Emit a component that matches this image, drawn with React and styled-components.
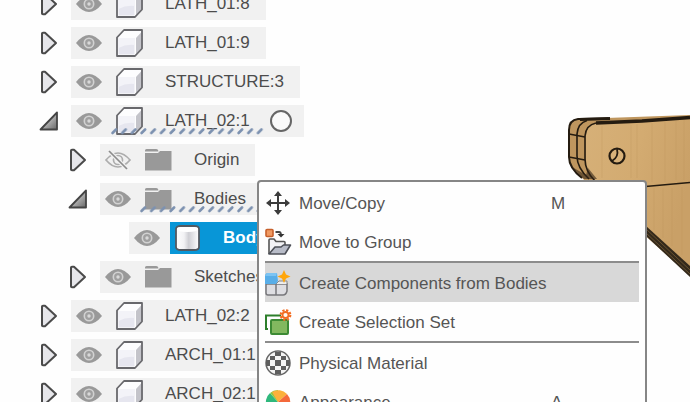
import React, { useState } from 'react';
import styled, { createGlobalStyle, css } from 'styled-components';

const GlobalStyle = createGlobalStyle`
  body {
    margin: 0;
    background: #fefefe;
    font-family: 'Liberation Sans', Arial, sans-serif;
  }
`;

const Workspace = styled.main`
  position: relative;
  display: flex;
  height: 100vh;
  overflow: hidden;
`;

const Tree = styled.ul`
  flex: none;
  margin: -12px 0 0;
  padding: 0;
  list-style: none;
  color: #4c4c4c;
  font-size: 17px;
`;

const Row = styled.li`
  display: flex;
  align-items: center;
  height: 32px;
  margin-bottom: 7px;
  padding-left: ${prop => 39 + prop.depth * 29}px;
`;

const iconButton = css`
  display: flex;
  flex: none;
  align-items: center;
  justify-content: center;
  padding: 0;
  border: 0;
  background: none;
`;

const Toggle = styled.button`
  ${iconButton}
  width: 20px;
  height: 24px;
  margin-right: 12px;
`;

const ToggleSpace = styled.span`
  width: 32px;
`;

const Strip = styled.div`
  position: relative;
  display: flex;
  align-items: center;
  height: 32px;
  padding-left: 5px;
  background: #f1f1f1;
`;

const EyeButton = styled.button`
  ${iconButton}
  width: 26px;
  height: 20px;
  margin-right: 10px;
`;

const Item = styled.div`
  display: flex;
  align-items: center;
  gap: 22px;
  height: 32px;
  padding: 0 16px 0 4px;
  ${prop =>
    prop.selected &&
    css`
      background: #0896d7;
      color: white;
      font-weight: bold;
    `}
`;

const Activate = styled.input`
  appearance: none;
  width: 22px;
  height: 22px;
  margin: 0 12px 0 4px;
  border: 2px solid #666;
  border-radius: 50%;
  background: #fafafa;
`;

const Hatch = styled.svg`
  position: absolute;
  left: 39px;
  bottom: 2px;
  width: 154px;
  height: 8px;
`;

const Viewport = styled.div`
  display: flex;
  flex: 1;
  justify-content: flex-end;
  min-width: 0;
  padding-top: 100px;
`;

const PartDrawing = styled.svg`
  flex: none;
  width: 130px;
  height: 200px;
`;

const Menu = styled.div`
  position: absolute;
  top: 180px;
  left: 257px;
  box-sizing: border-box;
  width: 390px;
  padding: 1px 6px;
  border: 2px solid #868686;
  border-radius: 4px;
  background: #fefefe;
`;

const MenuItem = styled.button`
  display: grid;
  grid-template-columns: 26px 1fr 80px;
  align-items: center;
  column-gap: 8px;
  width: 100%;
  height: 39px;
  padding: 0;
  border: 0;
  background: ${prop => (prop.active ? '#d8d8d8' : 'none')};
  color: #555;
  font-family: inherit;
  font-size: 17px;
  text-align: left;
  white-space: nowrap;
`;

const MenuText = styled.span`
  padding-top: 2px;
`;

const Shortcut = styled(MenuText)`
  padding-right: 8px;
  margin-left: -8px;
`;

const Separator = styled.hr`
  height: 2px;
  margin: 0;
  border: 0;
  background: #8c8c8c;
`;

const ArrowIcon = ({ open }) => (
  <svg width="20" height="24" viewBox="0 0 20 24" strokeLinejoin="round">
    <defs>
      <linearGradient id="arrowOpen" x1="0" y1="0" x2="1" y2="1">
        <stop offset="0.3" stopColor="#d0d0d0" />
        <stop offset="1" stopColor="#666" />
      </linearGradient>
    </defs>
    {open ? (
      <path d="M18 3.5V20.5H1.5z" fill="url(#arrowOpen)" stroke="#444" strokeWidth="1.8" />
    ) : (
      <path d="M3 2.5Q3 1.8 4 1.8H6L17 12L6 22.2H4Q3 22.2 3 21.5z" fill="#e6e6ea" stroke="#4a4a4a" strokeWidth="2" />
    )}
  </svg>
);

const EyeIcon = ({ hidden }) => (
  <svg width="26" height="20" viewBox="0 0 26 20" fill="none">
    {hidden ? (
      <g stroke="#adadad" strokeWidth="1.7">
        <path d="M1 10Q13-4 25 10Q13 24 1 10z" />
        <circle cx="13" cy="10" r="4.5" />
        <path d="M4 1L22 19" stroke="#f1f1f1" strokeWidth="4" />
        <path d="M4 1L22 19" stroke="#8c8c8c" />
      </g>
    ) : (
      <g>
        <path d="M0 10Q13-6 26 10Q13 26 0 10z" fill="#999" />
        <circle cx="13" cy="10" r="4.7" stroke="#d2d2d2" strokeWidth="1.6" fill="#a0a0a0" />
        <circle cx="13" cy="10" r="1.7" fill="#d8d8d8" />
      </g>
    )}
  </svg>
);

const ComponentIcon = () => (
  <svg width="27" height="28" viewBox="0 0 27 28" strokeLinejoin="round">
    <path d="M1 8.500L8 1H26V19.500L19 27H1z" fill="#fdfdfe" />
    <path d="M2.500 9H18.500V25.500H2.500z" fill="#e6e6ef" />
    <path d="M2.500 9H18.500V16Q10 15 2.500 19z" fill="#f3f3f8" />
    <path d="M20 9L25.500 3V19L20 25z" fill="#c4c4ca" />
    <path d="M1 8.500L8 1H26V19.500L19 27H1z" fill="none" stroke="#68686c" strokeWidth="1.8" />
  </svg>
);

const FolderIcon = () => (
  <svg width="27" height="24" viewBox="0 0 27 24" fill="#999">
    <path d="M0 2.5Q0 1 1.5 1H11Q12.5 1 13 2L13.5 3.5H0z" />
    <path d="M0 5H13L15 3H26.5V22.5H0z" />
  </svg>
);

const BodyIcon = () => (
  <svg width="27" height="28" viewBox="0 0 27 28">
    <defs>
      <linearGradient id="bodySide">
        <stop offset="0" stopColor="#fff" />
        <stop offset="0.35" stopColor="#f2f2f4" />
        <stop offset="0.55" stopColor="#cfcfd4" />
        <stop offset="1" stopColor="#fff" />
      </linearGradient>
    </defs>
    <path d="M2 5Q2 2 7 2H20Q25 2 25 5V23Q25 26 20 26H7Q2 26 2 23z" fill="url(#bodySide)" stroke="#545960" strokeWidth="1.8" />
    <path d="M3 5Q3 3 7 3H20Q24 3 24 5Q24 8 13.5 8Q3 8 3 5z" fill="#fff" />
  </svg>
);

const HatchMarks = () => (
  <Hatch aria-hidden="true">
    <defs>
      <pattern id="hatch" width="9.7" height="8" patternUnits="userSpaceOnUse">
        <path d="M2.5 6L6 2.5" stroke="#7c91b0" strokeWidth="2.6" strokeLinecap="round" />
      </pattern>
    </defs>
    <rect width="100%" height="8" fill="url(#hatch)" />
  </Hatch>
);

const MoveIcon = () => (
  <svg width="26" height="26" viewBox="0 0 26 26" fill="#3b3b3b">
    <path d="M12 5h2v16h-2zM5 12h16v2H5z" />
    <path d="M13 1l4 5H9zM13 25l4-5H9zM1 13l5-4v8zM25 13l-5-4v8z" />
  </svg>
);

const MoveToGroupIcon = () => (
  <svg width="27" height="28" viewBox="0 0 27 28" strokeLinejoin="round">
    <rect x="1" y="1.5" width="7" height="7" rx="1" fill="#f09a62" stroke="#c7602b" strokeWidth="1.6" />
    <path d="M10.500 4H14Q16 4 16 7" fill="none" stroke="#444" strokeWidth="1.8" />
    <path d="M12.500 6H19.500L16 9.500z" fill="#333" />
    <path d="M4 26V12Q4 11 5 11H9L11 13.500H19Q20 13.500 20 14.500V18" fill="#f2f2f5" stroke="#555" strokeWidth="1.6" />
    <path d="M4 26L10 19H16L18.500 17H25.500L20 26z" fill="#b8bcc8" stroke="#4d5058" strokeWidth="1.6" />
  </svg>
);

const CreateComponentIcon = () => (
  <svg width="26" height="28" viewBox="0 0 26 28">
    <path d="M1 15H11V26H3Q1 26 1 24zM11 15H22V22Q21 26 18 26H11z" fill="#dedee2" stroke="#77777b" strokeWidth="1.5" />
    <path d="M11 15L14 12H22V15" fill="#eee" stroke="#888" />
    <path d="M0 7Q0 5 2 4H12L13 12L11 15H0z" fill="#59aee8" />
    <path d="M0 7L2 4H12L11 7z" fill="#7cc4f3" />
    <path d="M19 1L21 5.500L25.500 7.500L21 9.500L19 14L17 9.500L12.500 7.500L17 5.500z" fill="#ffa60a" />
  </svg>
);

const SelectionSetIcon = () => (
  <svg width="27" height="28" viewBox="0 0 27 28">
    <path d="M3 21H1V7.500H16" fill="none" stroke="#2d7f2b" strokeWidth="2" />
    <rect x="6" y="12" width="17" height="14" rx="1" fill="#82b85f" stroke="#3c8a34" strokeWidth="2" />
    <circle cx="20.500" cy="7" r="4.800" fill="none" stroke="#f36c21" strokeWidth="2.200" strokeDasharray="2.200 1.570" />
    <circle cx="20.500" cy="7" r="3" fill="#fffaf2" stroke="#f36c21" strokeWidth="1.800" />
  </svg>
);

const MaterialIcon = () => (
  <svg width="26" height="26" viewBox="0 0 26 26">
    <circle cx="13" cy="13" r="12" fill="#f4f4f4" stroke="#666" strokeWidth="1.500" />
    <path
      d="M10 10h6v6h-6zM5 6h5v4H5zM16 6h5v4h-5zM5 16h5v4H5zM16 16h5v4h-5zM10 2h6v4h-6zM10 20h6v4h-6zM1 10h4v6H1zM21 10h4v6h-4z"
      fill="#5e5e5e"
    />
  </svg>
);

const AppearanceIcon = () => (
  <svg width="26" height="26" viewBox="0 0 26 26">
    <path d="M13 13L5 4A12 12 0 0 0 2 18z" fill="#2fb87d" />
    <path d="M13 13L5 4A12 12 0 0 1 13 1z" fill="#8fc640" />
    <path d="M13 13L7 3A12 12 0 0 1 22 5z" fill="#fbb03b" />
    <path d="M13 13L22 5A12 12 0 0 1 24 18z" fill="#f4693b" />
    <path d="M13 13L24 18A12 12 0 0 1 13 25z" fill="#b65cc0" />
    <path d="M13 13V25A12 12 0 0 1 2 18z" fill="#3f8fe0" />
  </svg>
);

const WoodPart = () => (
  <PartDrawing viewBox="560 100 130 200" role="img" aria-label="Lath part">
    <defs>
      <linearGradient id="wood" x1="0" y1="0" x2="1" y2="0.4">
        <stop offset="0" stopColor="#d6b078" />
        <stop offset="0.5" stopColor="#d3ab71" />
        <stop offset="1" stopColor="#c9a067" />
      </linearGradient>
    </defs>
    <path d="M569 130Q569 120 578 119L690 115V276L640 231L582 178Q569 168 569 157z" fill="#bf965e" />
    <path d="M586 136Q586 124 596 123L690 119V270L596 183Q586 172 586 160z" fill="url(#wood)" />
    <g stroke="#bd935a" strokeWidth="1" opacity="0.3">
      <path d="M602 126V178M631 125V178M637 124V178M652 123V182M665 122V182M676 121V180M684 120V180" />
      <path d="M654 188V230M663 188V238M672 188V246M682 187V255" />
    </g>
    <g fill="none" stroke="#241b10" strokeWidth="1.6">
      <path d="M582 178Q569 168 569 157V130Q569 120 578 119L608 118.500" strokeWidth="2" />
      <path d="M589 179Q577 168 577 156V134Q578 123 587 120.500" />
      <path d="M595 181Q585 171 585 159V136Q586 125 596 123" />
      <path d="M569 134L585 137M569 157L585 160" />
      <path d="M596 123L642 121L690 117.500" strokeWidth="3.400" />
      <path d="M580 119.500L610 118.500" strokeWidth="3" />
      <path d="M640 187L690 182.500" />
    </g>
    <path d="M572 167L584 179H597L588 168L586 175z" fill="#352717" opacity="0.6" />
    <path d="M646 226L690 266V277L646 236z" fill="#33291b" />
    <path d="M646 229L690 270M646 233L690 274" stroke="#80633a" strokeWidth="0.700" fill="none" />
    <circle cx="617" cy="156" r="7.500" fill="#d8b27a" stroke="#241b10" strokeWidth="2.200" />
    <path d="M617 149Q619 157 612 161" fill="none" stroke="#241b10" strokeWidth="1.800" />
  </PartDrawing>
);

const kindIcons = {
  component: ComponentIcon,
  folder: FolderIcon,
  body: BodyIcon
};

const nodes = [
  { name: 'LATH_01:8', kind: 'component', depth: 0 },
  { name: 'LATH_01:9', kind: 'component', depth: 0 },
  { name: 'STRUCTURE:3', kind: 'component', depth: 0 },
  { name: 'LATH_02:1', kind: 'component', depth: 0, open: true, activatable: true },
  { name: 'Origin', kind: 'folder', depth: 1, hidden: true },
  { name: 'Bodies', kind: 'folder', depth: 1, open: true },
  { name: 'Body1', kind: 'body', depth: 2, selected: true },
  { name: 'Sketches', kind: 'folder', depth: 1 },
  { name: 'LATH_02:2', kind: 'component', depth: 0 },
  { name: 'ARCH_01:1', kind: 'component', depth: 0 },
  { name: 'ARCH_02:1', kind: 'component', depth: 0 }
];

const menuItems = [
  { label: 'Move/Copy', shortcut: 'M', icon: MoveIcon },
  { label: 'Move to Group', icon: MoveToGroupIcon },
  { label: 'Create Components from Bodies', icon: CreateComponentIcon, separated: true },
  { label: 'Create Selection Set', icon: SelectionSetIcon },
  { label: 'Physical Material', icon: MaterialIcon, separated: true },
  { label: 'Appearance', shortcut: 'A', icon: AppearanceIcon }
];

const TreeRow = ({ node }) => {
  const [hidden, setHidden] = useState(Boolean(node.hidden));
  const Icon = kindIcons[node.kind];

  return (
    <Row depth={node.depth}>
      {node.kind === 'body' ? (
        <ToggleSpace />
      ) : (
        <Toggle aria-label={`Expand ${node.name}`} aria-expanded={Boolean(node.open)}>
          <ArrowIcon open={node.open} />
        </Toggle>
      )}
      <Strip>
        <EyeButton
          aria-label={`Visibility of ${node.name}`}
          onClick={() => setHidden(!hidden)}
        >
          <EyeIcon hidden={hidden} />
        </EyeButton>
        <Item selected={node.selected}>
          <Icon />
          <span>{node.name}</span>
        </Item>
        {node.activatable && (
          <Activate type="radio" name="active" aria-label={`Activate ${node.name}`} />
        )}
        {node.open && <HatchMarks />}
      </Strip>
    </Row>
  );
};

const App = () => {
  const [active, setActive] = useState('Create Components from Bodies');

  return (
    <Workspace>
      <GlobalStyle />
      <Tree>
        {nodes.map(node => (
          <TreeRow key={node.name} node={node} />
        ))}
      </Tree>
      <Viewport>
        <WoodPart />
      </Viewport>
      <Menu role="menu">
        {menuItems.map(({ label, shortcut, icon: Icon, separated }) => (
          <React.Fragment key={label}>
            {separated && <Separator />}
            <MenuItem
              role="menuitem"
              active={active === label}
              onMouseEnter={() => setActive(label)}
            >
              <Icon />
              <MenuText>{label}</MenuText>
              <Shortcut>{shortcut}</Shortcut>
            </MenuItem>
          </React.Fragment>
        ))}
      </Menu>
    </Workspace>
  );
};

export default App;
